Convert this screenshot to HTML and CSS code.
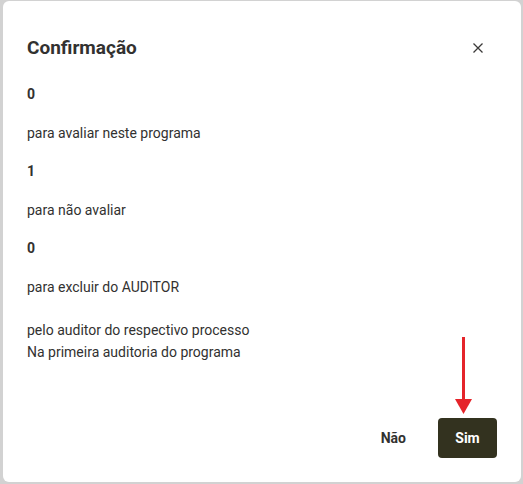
FILE: index.html
```html
<!DOCTYPE html>
<html lang="pt">
<head>
  <meta charset="UTF-8">
  <title>Confirmação</title>
  <link rel="stylesheet" href="styles.css">
</head>
<body>
  <div class="dialog">
    <div class="dialog-head">
      <h2 class="dialog-title">Confirmação</h2>
      <button class="btn-close" aria-label="Fechar">
        <svg width="12" height="12" viewBox="0 0 12 12"><path d="M1.5 1.5 L10.5 10.5 M10.5 1.5 L1.5 10.5" stroke="#3b3a39" stroke-width="1.3" fill="none"/></svg>
      </button>
    </div>
    <div class="dialog-body">
      <p class="num">0</p>
      <p>para avaliar neste programa</p>
      <p class="num">1</p>
      <p>para não avaliar</p>
      <p class="num">0</p>
      <p>para excluir do AUDITOR</p>
      <p class="note">pelo auditor do respectivo processo<br>Na primeira auditoria do programa</p>
    </div>
    <div class="dialog-foot">
      <button class="btn btn-no">Não</button>
      <button class="btn btn-yes">Sim</button>
    </div>
    <svg class="arrow" width="17" height="77" viewBox="0 0 17 77">
      <rect x="7" y="0" width="3" height="64" fill="#e5242a"/>
      <polygon points="0,62 17,62 8.5,77" fill="#e5242a"/>
    </svg>
  </div>
</body>
</html>
```

FILE: styles.css
```css
/* Base */
* { margin: 0; padding: 0; box-sizing: border-box; }
body {
  background: #d2d2d2;
  font-family: Roboto, 'Noto Sans', sans-serif; color: #323130;
  overflow: hidden;
}

/* Dialog */
.dialog {
  position: relative;
  width: 518px; height: 481px;
  margin: 1px 0 0 3px;
  background: #fff; border-radius: 6px;
  display: flex; flex-direction: column;
}
.dialog-head {
  display: flex; justify-content: space-between; align-items: center;
  padding: 31px 27px 0 24px;
}
.dialog-title { font-size: 19px; font-weight: 700; line-height: 28px; }
.btn-close {
  width: 32px; height: 32px; border: none; background: none;
  display: flex; align-items: center; justify-content: center; cursor: pointer;
}

.dialog-body { padding: 19px 24px 0; font-size: 14px; line-height: 22px; }
.dialog-body p { margin-bottom: 16.5px; }
.dialog-body .num { font-weight: 700; }
.dialog-body .note { margin-top: 21px; }

/* Footer */
.dialog-foot {
  margin-top: auto;
  display: flex; justify-content: flex-end; gap: 16px;
  padding: 0 24px 24px;
}
.btn {
  height: 40px; padding: 0 16px; border: none; border-radius: 4px;
  font-family: inherit; font-size: 14px; font-weight: 700; cursor: pointer;
}
.btn-no { background: none; color: #323130; }
.btn-yes { background: #33321f; color: #fff; min-width: 59px; }

/* Annotation */
.arrow { position: absolute; left: 452px; top: 336px; }
```
